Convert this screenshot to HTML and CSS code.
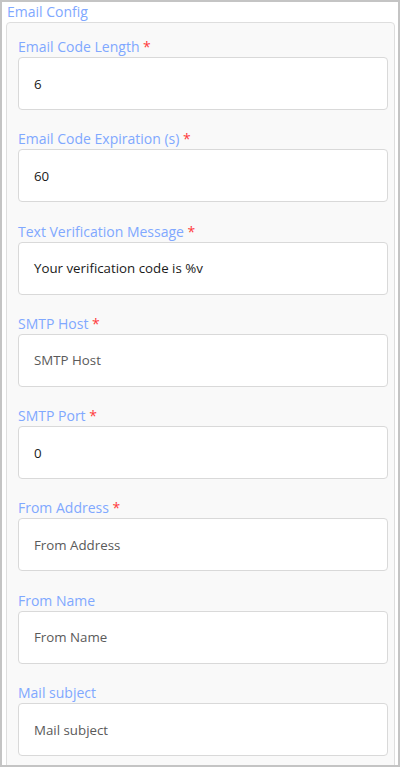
FILE: index.html
```html
<!DOCTYPE html>
<html>
<head>
<meta charset="utf-8">
<link rel="stylesheet" href="styles.css">
</head>
<body>
<div class="frame">
  <div class="legend">Email Config</div>
  <div class="panel">
    <div class="field">
      <label class="label">Email Code Length <span class="req">*</span></label>
      <div class="input value">6</div>
    </div>
    <div class="field">
      <label class="label">Email Code Expiration (s) <span class="req">*</span></label>
      <div class="input value">60</div>
    </div>
    <div class="field">
      <label class="label">Text Verification Message <span class="req">*</span></label>
      <div class="input value">Your verification code is %v</div>
    </div>
    <div class="field">
      <label class="label">SMTP Host <span class="req">*</span></label>
      <div class="input placeholder">SMTP Host</div>
    </div>
    <div class="field">
      <label class="label">SMTP Port <span class="req">*</span></label>
      <div class="input value">0</div>
    </div>
    <div class="field">
      <label class="label">From Address <span class="req">*</span></label>
      <div class="input placeholder">From Address</div>
    </div>
    <div class="field">
      <label class="label">From Name</label>
      <div class="input placeholder">From Name</div>
    </div>
    <div class="field">
      <label class="label">Mail subject</label>
      <div class="input placeholder">Mail subject</div>
    </div>
  </div>
</div>
</body>
</html>
```

FILE: styles.css
```css
html, body {
  margin: 0;
  padding: 0;
  background: #ffffff;
}
body {
  font-family: "Open Sans", "Noto Sans", sans-serif;
  font-size: 14px;
}
.frame {
  box-sizing: border-box;
  width: 400px;
  height: 767px;
  border: 2px solid #c4c4c4;
  background: #ffffff;
  overflow: hidden;
}
.legend {
  color: #80a8ff;
  font-size: 14px;
  line-height: 20px;
  padding-left: 5px;
}
.panel {
  margin-left: 4px;
  margin-right: 3px;
  border: 1px solid #dedede;
  border-radius: 4px;
  background: #f9f9f9;
  padding: 13px 6px 0 11px;
  height: 800px;
}
.field {
  margin-bottom: 18.3px;
}
.label {
  display: block;
  color: #80a8ff;
  line-height: 21px;
  font-size: 14px;
}
.req {
  color: #ff3b3b;
}
.input {
  box-sizing: border-box;
  height: 53px;
  background: #ffffff;
  border: 1px solid #d9d9d9;
  border-radius: 4px;
  padding: 0 15px;
  display: flex;
  align-items: center;
  font-size: 13.3px;
}
.value {
  color: #1a1a1a;
}
.placeholder {
  color: #5a5a5a;
}
```
